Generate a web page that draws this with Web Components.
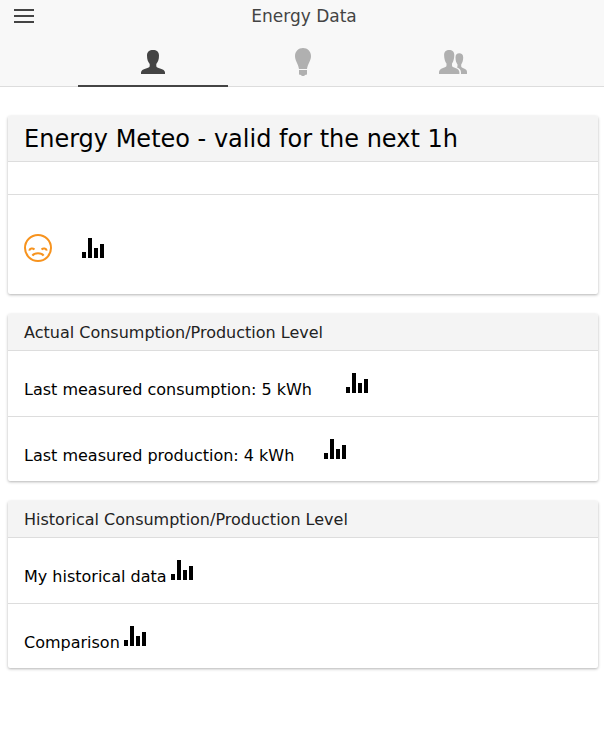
<!DOCTYPE html>
<html lang="en">
<head>
<meta charset="utf-8">
<title>Energy Data</title>
<style>
  body { margin: 0; background: #fff; color: #000; font: 16px/20px "DejaVu Sans", sans-serif; }
</style>
</head>
<body>
<energy-app></energy-app>
<script>
class BaseElement extends HTMLElement {
  connectedCallback() {
    if (this.shadowRoot) return;
    this.attachShadow({ mode: 'open' }).innerHTML = this.render();
  }
}

const ICONS = {
  person: '<svg width="24" height="24" viewBox="0 0 24 24"><path d="M12 0C15.600 0 18 1.800 18 5.500C18 9.500 17 11.800 15.300 14V16C15.300 17.500 17 17.900 19 18.400C22 19.200 24 20.500 24 22.500V24H0V22.500C0 20.500 2 19.200 5 18.400C7 17.900 8.700 17.500 8.700 16V14C7 11.800 6 9.500 6 5.500C6 1.800 8.400 0 12 0Z"/></svg>',
  bulb: '<svg width="16" height="28" viewBox="0 0 16 28"><path d="M8 0C12.500 0 16 3.300 16 8C16 12.500 12.800 15.500 12 21H4C3.200 15.500 0 12.500 0 8C0 3.300 3.500 0 8 0ZM4 22H12V26.500L10 27C9.500 28.300 6.500 28.300 6 27L4 26.500Z"/></svg>',
  people: '<svg width="28" height="24" viewBox="0 0 28 24"><path d="M10.200 0C13.300 0 15.400 1.700 15.300 5.200C15.200 9 14.400 11.300 13 13.600V15.500C13 17 14.500 17.300 16.400 18.100C19 19.100 20.400 20.300 20.400 22.500V24H0V22.500C0 20.300 1.400 19.100 4 18.100C5.900 17.300 7.500 17 7.500 15.500V13.600C6 11.300 5.200 9 5.100 5.200C5 1.700 7.100 0 10.200 0ZM20.200 3.200C22.600 3.200 24.200 4.600 24.200 7.300C24.200 10.500 23.400 12.800 22.200 14.500V16.300C22.200 17.400 23.400 17.900 25 18.500C27.300 19.300 28 20.300 28 22.200V24H22V22.500C22 19.700 20.500 18.400 17.800 17.200C18.300 16.900 18.500 16.500 18.500 15.900V14.500C17.200 12.800 16.500 10.500 16.500 7.300C16.500 4.600 18 3.200 20.200 3.200Z"/></svg>'
};

customElements.define('energy-header', class extends BaseElement {
  render() {
    return `<style>
      :host { display: block; background: #f8f8f8; color: #444; border-bottom: 1px solid #ddd; }
      .bar { display: grid; grid-template-columns: 48px 1fr 48px; align-items: center; height: 32px; padding-left: 4px; }
      h1 { margin: 0; font-size: 17px; line-height: 20px; font-weight: 400; text-align: center; }
      button { display: flex; align-items: center; padding: 0; margin: 0; border: 0; background: none; color: inherit; cursor: pointer; }
      .menu { padding-left: 10px; height: 32px; }
      svg { display: block; fill: currentColor; }
      nav { display: flex; justify-content: center; height: 55px; padding-left: 2px; margin-bottom: -1px; }
      nav button { flex: 0 1 150px; justify-content: center; box-sizing: border-box; height: 55px; padding-top: 7px; border-bottom: 2px solid transparent; color: #b0b0b0; }
      nav button[aria-current] { color: #444; border-color: #444; }
    </style>
    <header>
      <div class="bar">
        <button class="menu" aria-label="Menu"><svg width="20" height="14" viewBox="0 0 20 14"><path d="M0 0H20V2H0ZM0 6H20V8H0ZM0 12H20V14H0Z"/></svg></button>
        <h1>Energy Data</h1>
      </div>
      <nav>
        <button aria-label="Personal" aria-current="page">${ICONS.person}</button>
        <button aria-label="Tips">${ICONS.bulb}</button>
        <button aria-label="Community">${ICONS.people}</button>
      </nav>
    </header>`;
  }
});

customElements.define('energy-card', class extends BaseElement {
  render() {
    return `<style>
      :host { display: block; background: #fff; border-radius: 2px; overflow: hidden; box-shadow: 0 1px 3px rgba(0,0,0,.3); }
      header { background: #f4f4f4; color: #222; padding: 9px 16px 7px; }
      :host([large]) header { color: #000; padding: 8px 16px 7px; }
      ::slotted(h2) { margin: 0; font-size: 16px; line-height: 20px; font-weight: 400; }
      :host([large]) ::slotted(h2) { font-size: 24px; line-height: 30px; }
    </style>
    <header><slot name="title"></slot></header><slot></slot>`;
  }
});

customElements.define('energy-row', class extends BaseElement {
  render() {
    return `<style>
      :host { display: flex; align-items: flex-end; padding: 22px 16px 16px; border-top: 1px solid #ddd; }
      :host(:last-child) { padding-bottom: 15px; }
      :host([empty]) { padding: 16px; }
      :host([status]) { align-items: center; gap: 30px; padding: 39px 16px 32px; }
    </style><slot></slot>`;
  }
});

customElements.define('chart-button', class extends BaseElement {
  render() {
    return `<style>
      :host { display: block; margin: 0 0 7px var(--gap, 4px); }
      :host([plain]) { margin: 0; }
      button { display: block; padding: 0; border: 0; background: none; color: #000; cursor: pointer; }
      svg { display: block; fill: currentColor; }
    </style>
    <button aria-label="Show chart"><svg width="22" height="20" viewBox="0 0 22 20"><path d="M0 14H4V20H0ZM6 0H10V20H6ZM12 10H16V20H12ZM18 6H22V20H18Z"/></svg></button>`;
  }
});

customElements.define('mood-icon', class extends BaseElement {
  render() {
    return `<style>:host { display: block; color: #f7931e; } svg { display: block; fill: none; stroke: currentColor; stroke-width: 2; }</style>
    <svg width="28" height="28" viewBox="0 0 28 28" role="img" aria-label="Unfavourable">
      <circle cx="14" cy="14" r="13"/>
      <path d="M5.300 16.600C5.600 14.400 8.500 13.600 10.500 15.500M22.700 16.600C22.400 14.400 19.500 13.600 17.500 15.500M8.400 21.600C10.400 18.400 17.600 18.400 19.600 21.600"/>
    </svg>`;
  }
});

customElements.define('energy-app', class extends BaseElement {
  render() {
    return `<style>
      :host { display: block; }
      main { display: grid; gap: 20px; padding: 29px 6px 20px 8px; }
      .wide { --gap: 34px; }
      .medium { --gap: 30px; }
    </style>
    <energy-header></energy-header>
    <main>
      <energy-card large>
        <h2 slot="title">Energy Meteo - valid for the next 1h</h2>
        <energy-row empty></energy-row>
        <energy-row status><mood-icon></mood-icon><chart-button plain></chart-button></energy-row>
      </energy-card>
      <energy-card>
        <h2 slot="title">Actual Consumption/Production Level</h2>
        <energy-row><span>Last measured consumption: 5 kWh</span><chart-button class="wide"></chart-button></energy-row>
        <energy-row><span>Last measured production: 4 kWh</span><chart-button class="medium"></chart-button></energy-row>
      </energy-card>
      <energy-card>
        <h2 slot="title">Historical Consumption/Production Level</h2>
        <energy-row><span>My historical data</span><chart-button></chart-button></energy-row>
        <energy-row><span>Comparison</span><chart-button></chart-button></energy-row>
      </energy-card>
    </main>`;
  }
});
</script>
</body>
</html>
